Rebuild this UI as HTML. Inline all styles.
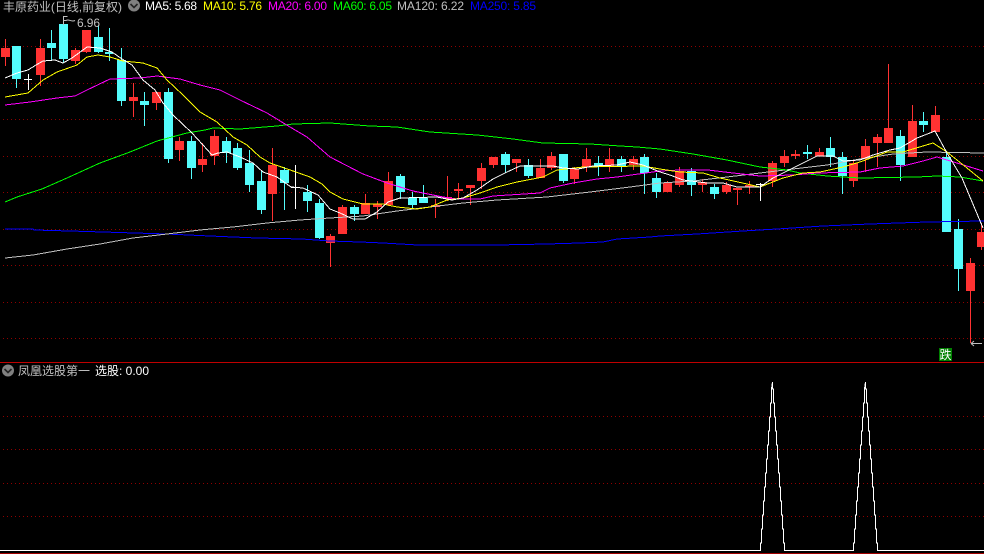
<!DOCTYPE html>
<html><head><meta charset="utf-8"><title>丰原药业</title>
<style>
html,body{margin:0;padding:0;background:#000;width:984px;height:554px;overflow:hidden}
svg{display:block;position:absolute;left:0;top:0}
text{font-family:"Liberation Sans",sans-serif;font-size:12px}
.c{font-family:"Liberation Sans","WenQuanYi Zen Hei","Noto Sans CJK SC",sans-serif}
.g{stroke:#900000;stroke-width:1;stroke-dasharray:1 3;fill:none}
.l{fill:none;stroke-width:1;shape-rendering:crispEdges}
</style></head><body>
<svg width="984" height="554" viewBox="0 0 984 554" xmlns="http://www.w3.org/2000/svg">
<rect width="984" height="554" fill="#000"/>
<g class="g" shape-rendering="crispEdges">
<path d="M3 46.5H984M3 83.5H984M3 119.5H984M3 156.5H984M3 192.5H984M3 229.5H984M3 265.5H984M3 302.5H984M3 338.5H984M3 416.5H984M3 449.5H984M3 483.5H984M3 516.5H984"/>
</g>
<rect x="0" y="362" width="984" height="1" fill="#c00000"/>
<rect x="0" y="553" width="984" height="1" fill="#a00000"/>

<g shape-rendering="crispEdges">
<path fill="#ff3232" d="M5 39h1v27h-1zM1 48h9v9h-9zM40 39h1v47h-1zM36 48h9v27h-9zM75 48h1v16h-1zM71 50h9v11h-9zM86 30h1v23h-1zM82 30h9v22h-9zM133 83h1v34h-1zM129 97h9v4h-9zM156 92h1v18h-1zM152 92h9v11h-9zM179 137h1v24h-1zM175 141h9v9h-9zM202 143h1v29h-1zM198 159h9v6h-9zM214 130h1v35h-1zM210 136h9v20h-9zM272 148h1v73h-1zM268 165h9v29h-9zM330 234h1v33h-1zM326 236h9v7h-9zM342 205h1v29h-1zM338 207h9v27h-9zM365 194h1v20h-1zM361 203h9v11h-9zM377 201h1v18h-1zM373 204h9v3h-9zM388 172h1v34h-1zM384 181h9v24h-9zM435 199h1v19h-1zM431 205h9v2h-9zM447 176h1v25h-1zM443 197h9v2h-9zM458 183h1v15h-1zM454 189h9v2h-9zM470 185h1v20h-1zM466 185h9v3h-9zM481 163h1v26h-1zM477 168h9v13h-9zM493 157h1v11h-1zM489 157h9v8h-9zM516 159h1v13h-1zM512 159h9v4h-9zM540 159h1v19h-1zM536 168h9v10h-9zM551 152h1v18h-1zM547 156h9v12h-9zM574 167h1v17h-1zM570 169h9v10h-9zM586 148h1v24h-1zM582 159h9v8h-9zM609 148h1v24h-1zM605 159h9v8h-9zM633 156h1v14h-1zM629 159h9v6h-9zM667 181h1v11h-1zM663 183h9v9h-9zM679 167h1v20h-1zM675 171h9v14h-9zM702 179h1v13h-1zM698 182h9v3h-9zM726 182h1v12h-1zM722 185h9v7h-9zM737 188h1v17h-1zM733 188h9v2h-9zM749 181h1v13h-1zM745 185h9v2h-9zM772 161h1v26h-1zM768 163h9v18h-9zM784 150h1v17h-1zM780 156h9v7h-9zM795 150h1v9h-1zM791 154h9v2h-9zM819 148h1v8h-1zM815 152h9v4h-9zM853 160h1v27h-1zM849 163h9v18h-9zM865 139h1v33h-1zM861 146h9v13h-9zM877 134h1v33h-1zM873 137h9v6h-9zM888 64h1v79h-1zM884 128h9v15h-9zM912 105h1v52h-1zM908 121h9v36h-9zM935 106h1v26h-1zM931 115h9v17h-9zM970 258h1v85h-1zM966 263h9v28h-9zM981 223h1v27h-1zM977 232h9v15h-9z"/>
<path fill="#54fcfc" d="M16 46h1v42h-1zM12 46h9v33h-9zM51 30h1v30h-1zM47 43h9v5h-9zM63 18h1v45h-1zM59 24h9v35h-9zM98 25h1v28h-1zM94 37h9v15h-9zM109 28h1v33h-1zM105 52h8v2h-8zM121 48h1v58h-1zM117 60h9v41h-9zM144 92h1v34h-1zM140 101h9v4h-9zM168 88h1v75h-1zM164 92h9v67h-9zM191 136h1v43h-1zM187 141h9v27h-9zM226 137h1v26h-1zM222 141h9v12h-9zM237 143h1v27h-1zM233 148h9v20h-9zM249 150h1v42h-1zM245 163h9v22h-9zM261 170h1v44h-1zM257 181h9v29h-9zM284 167h1v43h-1zM280 170h9v13h-9zM307 185h1v27h-1zM303 192h9v9h-9zM319 199h1v40h-1zM315 203h9v35h-9zM354 205h1v16h-1zM350 207h9v7h-9zM400 174h1v25h-1zM396 176h9v16h-9zM412 192h1v17h-1zM408 198h9v7h-9zM423 185h1v18h-1zM419 198h9v5h-9zM505 152h1v21h-1zM501 154h9v11h-9zM528 159h1v19h-1zM524 165h9v11h-9zM563 154h1v29h-1zM559 154h9v27h-9zM598 156h1v20h-1zM594 163h9v4h-9zM621 156h1v16h-1zM617 159h9v8h-9zM644 154h1v40h-1zM640 157h9v16h-9zM656 173h1v25h-1zM652 178h9v14h-9zM691 168h1v28h-1zM687 171h9v14h-9zM714 184h1v15h-1zM710 187h9v7h-9zM807 145h1v14h-1zM803 152h9v2h-9zM830 137h1v30h-1zM826 148h9v9h-9zM842 152h1v42h-1zM838 157h9v19h-9zM900 130h1v51h-1zM896 136h9v29h-9zM923 112h1v20h-1zM919 121h9v4h-9zM946 152h1v80h-1zM942 157h9v75h-9zM958 219h1v72h-1zM954 229h9v40h-9z"/>
<path fill="#fff" d="M28 74h1v16h-1zM24 79h8v1h-8zM295 165h1v44h-1zM291 187h9v1h-9zM760 183h1v18h-1zM756 184h9v1h-9z"/>
</g>

<polyline class="l" stroke="#0000ff" stroke-width="1.5" points="5,229 33,229 34,230 70,231 103,232 167,234 210,236 257,238 302,239 330,241 360,242 383,243 418,245 453,245 497,245 547,244 580,243 603,242 617,239 650,237 660,236 697,234 743,231 777,229 823,226 870,224 927,222 984,221"/>
<polyline class="l" stroke="#c0c0c0" points="5,258 33,255 67,249 100,244 133,238 167,234 200,230 233,227 267,223 300,220 330,218 363,216 397,211 430,207 463,203 497,200 547,197 590,192 630,187 660,183 693,181 727,177 760,173 793,169 827,165 860,159 893,154 927,152 984,153"/>
<polyline class="l" stroke="#00ff00" points="5,202 17,197 42,189 67,178 100,163 130,152 157,141 187,133 205,130 213,128 240,129 277,126 293,124 330,123 370,126 397,127 430,132 477,135 513,139 543,143 590,144 620,146 637,147 660,149 693,154 727,160 760,167 787,170 800,173 827,176 860,178 917,177 937,176 960,177 983,181"/>
<polyline class="l" stroke="#ff00ff" points="5,105 30,102 57,98 75,96 87,90 110,79 140,78 157,76 180,79 200,85 220,90 240,100 267,113 290,127 307,137 330,157 363,174 387,183 413,191 443,197 457,199 480,199 493,196 540,193 550,188 573,183 597,179 617,177 660,171 680,170 708,170 733,173 760,176 793,175 817,173 860,172 880,168 903,166 923,161 937,157 957,163 983,171"/>
<polyline class="l" stroke="#ffff00" points="5,97 28,93 43,80 57,72 77,65 87,57 98,55 110,57 123,61 143,63 157,68 167,80 183,95 200,112 217,122 233,137 247,145 260,157 270,163 293,171 310,177 322,184 330,192 343,199 363,204 383,204 397,207 417,209 430,207 447,200 463,198 480,193 497,187 517,182 543,177 557,170 583,167 643,166 660,169 680,172 703,173 720,178 747,184 760,187 783,178 803,173 820,172 843,167 860,162 887,152 903,152 933,143 947,152 967,168 983,181"/>
<polyline class="l" stroke="#ffffff" points="5,78 17,73 28,70 36,65 43,61 55,60 63,63 72,58 87,47 100,48 112,52 122,59 132,65 143,80 155,90 163,103 173,115 192,133 203,145 212,155 218,153 227,152 240,157 253,163 263,172 277,177 291,187 303,188 318,195 330,209 340,213 353,219 365,219 377,212 388,202 400,198 437,197 452,200 463,198 477,190 493,179 507,172 520,166 553,166 563,168 578,169 593,166 617,165 630,162 643,165 660,172 670,175 683,180 707,183 723,183 737,187 760,187 773,178 793,168 817,156 833,156 843,161 860,160 873,155 890,150 900,148 917,138 935,131 947,153 962,178 983,228"/>

<!-- top legend -->
<text class="c" x="3" y="11" fill="#c0c0c0" textLength="119" lengthAdjust="spacing">丰原药业(日线,前复权)</text>
<circle cx="134" cy="5.5" r="6" fill="#808080"/>
<path d="M130.5 4l3.5 3.5 3.5-3.5" fill="none" stroke="#222" stroke-width="1.6"/>
<text x="145" y="10" fill="#ffffff" textLength="52">MA5: 5.68</text>
<text x="203" y="10" fill="#ffff00" textLength="59">MA10: 5.76</text>
<text x="268" y="10" fill="#ff00ff" textLength="59">MA20: 6.00</text>
<text x="333" y="10" fill="#00ff00" textLength="59">MA60: 6.05</text>
<text x="397" y="10" fill="#c0c0c0" textLength="67">MA120: 6.22</text>
<text x="470" y="10" fill="#0000ff" textLength="66">MA250: 5.85</text>

<!-- high marker -->
<path d="M63.5 25V16.500h4M63.500 20.500h3M66 20.500c3-2 5 2 9 0" fill="none" stroke="#c0c0c0" stroke-width="1"/>
<text x="77" y="27" fill="#c0c0c0" textLength="23">6.96</text>

<!-- low marker -->
<path d="M971 343.500h11M971 343.500l3-2.500M971 343.500l3 2.500" fill="none" stroke="#c0c0c0" stroke-width="1"/>

<!-- sell badge -->
<rect x="939" y="348" width="13" height="13" fill="#008000"/>
<text class="c" x="939.500" y="359" fill="#ffffff">跌</text>

<!-- lower legend -->
<circle cx="8" cy="370.500" r="6" fill="#808080"/>
<path d="M4.500 369l3.500 3.500 3.500-3.500" fill="none" stroke="#222" stroke-width="1.600"/>
<text class="c" x="18" y="375" fill="#c0c0c0" textLength="72">凤凰选股第一</text>
<text class="c" x="95" y="375" fill="#ffffff" textLength="54">选股: 0.00</text>

<!-- lower chart -->
<polyline fill="none" stroke="#ffffff" stroke-width="1" shape-rendering="crispEdges" points="0,550.500 760.500,550.500 760.500,543 761.500,543 761.500,529 762.500,529 762.500,515 763.500,515 763.500,501 764.500,501 764.500,487 765.500,487 765.500,473 766.500,473 766.500,459 767.500,459 767.500,445 768.500,445 768.500,431 769.500,431 769.500,417 770.500,417 770.500,403 771.500,403 771.500,389 772.500,382 772.500,389 773.500,389 773.500,403 774.500,403 774.500,417 775.500,417 775.500,431 776.500,431 776.500,445 777.500,445 777.500,459 778.500,459 778.500,473 779.500,473 779.500,487 780.500,487 780.500,501 781.500,501 781.500,515 782.500,515 782.500,529 783.500,529 783.500,543 784.500,543 784.500,550.500 853.500,550.500 853.500,543 854.500,543 854.500,529 855.500,529 855.500,515 856.500,515 856.500,501 857.500,501 857.500,487 858.500,487 858.500,473 859.500,473 859.500,459 860.500,459 860.500,445 861.500,445 861.500,431 862.500,431 862.500,417 863.500,417 863.500,403 864.500,403 864.500,389 865.500,382 865.500,389 866.500,389 866.500,403 867.500,403 867.500,417 868.500,417 868.500,431 869.500,431 869.500,445 870.500,445 870.500,459 871.500,459 871.500,473 872.500,473 872.500,487 873.500,487 873.500,501 874.500,501 874.500,515 875.500,515 875.500,529 876.500,529 876.500,543 877.500,543 877.500,550.500 984,550.500"/>
</svg>
</body></html>
